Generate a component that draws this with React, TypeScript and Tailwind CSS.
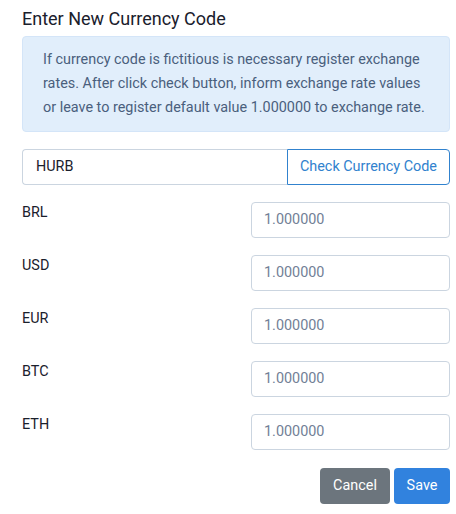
import React from "react";

const rows = ["BRL", "USD", "EUR", "BTC", "ETH"];

export default function App() {
  return (
    <div className="w-[456px] h-[514px] bg-white pl-[22px] pr-[6px] pt-[5px] text-[14.4px] text-[#1a202c]" style={{ fontFamily: "Roboto, 'Liberation Sans', sans-serif" }}>
      <h2 className="text-[18px] leading-[27px] text-[#1a202c]">Enter New Currency Code</h2>
      <div className="mt-[4px] rounded-[4px] border border-[#d4e5f8] bg-[#e1eefb] pl-5 pr-[24px] py-[11px] leading-[24px] text-[#4a5f7d]">
        If currency code is fictitious is necessary register exchange rates. After click check button, inform exchange rate values or leave to register default value 1.000000 to exchange rate.
      </div>
      <div className="mt-[17px] flex h-[36px]">
        <div className="flex flex-1 items-center rounded-l-[4px] border border-r-0 border-[#cbd5e0] px-[13px] text-[#1a202c]">HURB</div>
        <button className="rounded-r-[4px] border border-[#3182ce] px-[12px] text-[#3182ce]">Check Currency Code</button>
      </div>
      <div className="mt-[17px] flex flex-col gap-[17px]">
        {rows.map((r) => (
          <div key={r} className="flex justify-between">
            <div className="pt-[1px] leading-[20px]">{r}</div>
            <div className="flex h-[36px] w-[199px] items-center rounded-[4px] border border-[#cbd5e0] px-[12px] text-[#718096]">1.000000</div>
          </div>
        ))}
      </div>
      <div className="mt-[18px] flex justify-end gap-[4px]">
        <button className="h-[36px] w-[70px] rounded-[4px] bg-[#6c757d] text-white">Cancel</button>
        <button className="h-[36px] w-[56px] rounded-[4px] bg-[#3182de] text-white">Save</button>
      </div>
    </div>
  );
}
